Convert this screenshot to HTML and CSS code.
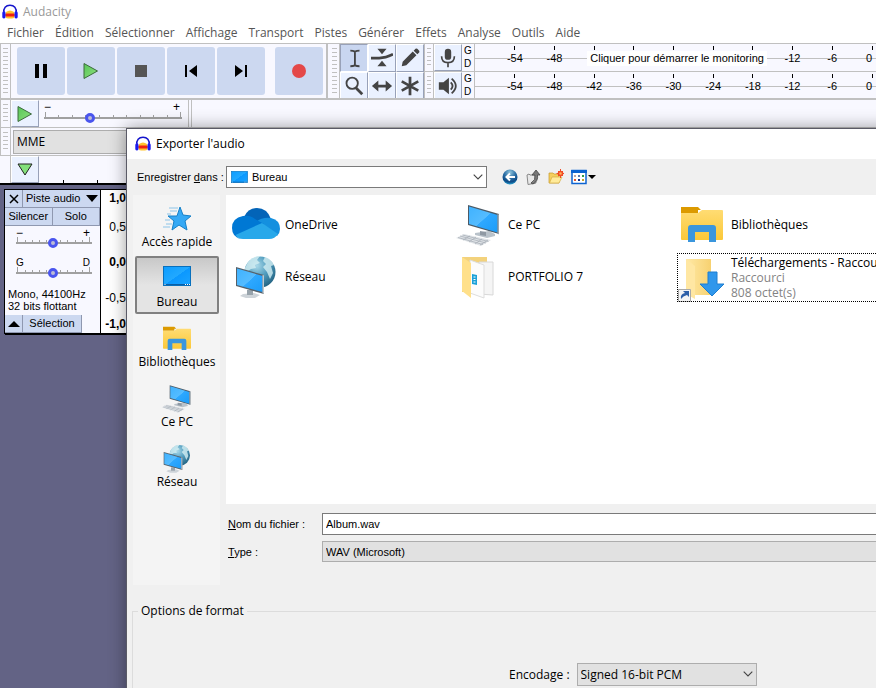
FILE: index.html
```html
<!DOCTYPE html>
<html lang="fr">
<head>
<meta charset="utf-8">
<title>Audacity</title>
<link rel="stylesheet" href="styles.css">
</head>
<body>
<svg class="defs" aria-hidden="true">
  <defs>
    <linearGradient id="gScreen" x1="0" y1="0" x2="1" y2="1"><stop offset="0" stop-color="#3fb2ff"/><stop offset=".5" stop-color="#55bcff"/><stop offset=".51" stop-color="#2ea8ff"/><stop offset="1" stop-color="#1b9cf8"/></linearGradient>
    <linearGradient id="gDesk" x1="0" y1="0" x2="1" y2="1"><stop offset="0" stop-color="#0c9cff"/><stop offset=".5" stop-color="#22a9ff"/><stop offset=".51" stop-color="#0b98ff"/><stop offset="1" stop-color="#1ba4ff"/></linearGradient>
    <linearGradient id="gFolder" x1="0" y1="0" x2="0" y2="1"><stop offset="0" stop-color="#ffdc73"/><stop offset="1" stop-color="#fbc838"/></linearGradient>
    <linearGradient id="gPale" x1="0" y1="0" x2="1" y2="0"><stop offset="0" stop-color="#ffe9a6"/><stop offset="1" stop-color="#f7d170"/></linearGradient>
    <radialGradient id="gGlobe" cx=".4" cy=".3" r=".75"><stop offset="0" stop-color="#a9d8e8"/><stop offset=".5" stop-color="#4f9bbd"/><stop offset="1" stop-color="#21607f"/></radialGradient>
    <linearGradient id="gPlay" x1="0" y1="0" x2="1" y2="1"><stop offset="0" stop-color="#58c658"/><stop offset="1" stop-color="#8ee07e"/></linearGradient>
    <radialGradient id="gBack" cx=".5" cy=".2" r=".85"><stop offset="0" stop-color="#8fc4dc"/><stop offset=".45" stop-color="#2b6ea5"/><stop offset=".75" stop-color="#0d4a86"/><stop offset="1" stop-color="#35c2ee"/></radialGradient>
    <symbol id="logo" viewBox="0 0 16 16"><path d="M4 8q4-3 8 0l1 3-1 3q-4 1-8 0l-1-3z" fill="#ffc42e"/><path d="M3 11l2-2 1 1 1-1 1 1 1-1 1 1 1-1 2 2-2 2-1-1-1 1-1-1-1 1-1-1-1 1z" fill="#f02010"/><path d="M2 9C1 4 4 1.200 8 1.200S15 4 14 9" fill="none" stroke="#1515cc" stroke-width="1.500"/><rect x=".3" y="7.500" width="3.200" height="7" rx="1.400" fill="#1a1af0"/><rect x="12.500" y="7.500" width="3.200" height="7" rx="1.400" fill="#1a1af0"/></symbol>
    <symbol id="deskicon" viewBox="0 0 28 20"><rect x=".5" y=".5" width="27" height="19" fill="url(#gDesk)" stroke="#0870bd"/><path d="M1 18.500h26" stroke="#0a5ea5"/><path d="M1.500 18.500h1M22 18.500h1M24 18.500h1M26 18.500h1" stroke="#fff"/></symbol>
    <symbol id="pc" viewBox="0 0 48 48"><path d="M20 33l14-2 6 3v2l-8 2-12-3z" fill="#b9c2ca"/><path d="M25 31l6 1v4l-6-1z" fill="#8f99a3"/><path d="M13 5l31 9v20L13 25z" fill="#4c5a66"/><path d="M14 6.500l28.500 8.500v17.500L14 24z" fill="url(#gScreen)"/><path d="M42.500 14l1.500.5v20l-1.500-1z" fill="#9aa5ae"/><path d="M1 38l8-4 27 6-10 6z" fill="#dfe3e7"/><path d="M5 36l26 7M3 37.500l25 7M7.500 35l26 6.500M8 40l7-4M14 42l7-5M20 44l7-5M25 45l8-5" stroke="#a3abb3" stroke-width=".7" fill="none"/></symbol>
    <symbol id="net" viewBox="0 0 48 48"><circle cx="28" cy="20" r="15.500" fill="url(#gGlobe)"/><path d="M16 10q5-6 12-6l-3 4 3 3-5 2 1 3-5 1-3 2-4-1zM33 5q6 2 9 8l-3 1 2 7-3 6-3-7-4-5 3-3-3-3z" fill="#d5eff3" opacity=".8"/><path d="M11 42l11-1 6 2-5 3h-9l-6-2z" fill="#cdd3d8"/><path d="M15 38h6v5h-6z" fill="#98a3ab"/><path d="M4 15l28 8v19L4 34z" fill="#56616a"/><path d="M5 16.500L30.500 24v16L5 33z" fill="url(#gScreen)"/><path d="M30.500 23l1.500.3V42l-1.500-1z" fill="#c1c9cf"/></symbol>
    <symbol id="lib" viewBox="0 0 48 48"><path d="M3 7h17l3 3h-3v3H3z" fill="#dc9a00"/><path d="M3 13h17l4-3h20q1 0 1 1v28q0 1-1 1H4q-1 0-1-1z" fill="url(#gFolder)"/><path d="M10 42V28q0-3 3-3h22q3 0 3 3v14h-7V32H17v10z" fill="#3a96dd"/></symbol>
    <symbol id="play" viewBox="0 0 16 18"><path d="M1 1.500L14.500 9 1 16.500z" fill="url(#gPlay)" stroke="#3c6b3c"/></symbol>
    <symbol id="chev" viewBox="0 0 10 6"><path d="M.7.7L5 5 9.300.7" fill="none" stroke="#444" stroke-width="1.100"/></symbol>
    <symbol id="ticks" viewBox="0 0 138 8"><path d="M0 6h138" stroke="#a0a0a0" stroke-width="2"/><path d="M1.500 0v6M14.500 3v3M28.500 3v3M41.500 3v3M55.500 3v3M69.500 3v3M82.500 3v3M96.500 3v3M109.500 3v3M123.500 3v3M136.500 0v6" stroke="#a0a0a0"/></symbol>
    <symbol id="ticksmall" viewBox="0 0 76 8"><path d="M0 6h76" stroke="#a0a0a0" stroke-width="2"/><path d="M1.500 0v6M9.500 3v3M16.500 3v3M23.500 3v3M30.500 3v3M44.500 3v3M51.500 3v3M59.500 3v3M66.500 3v3M73.500 0v6" stroke="#a0a0a0"/></symbol>
  </defs>
</svg>

<div class="app">
  <header class="titlebar"><svg class="logo"><use href="#logo"/></svg><span>Audacity</span></header>
  <nav class="menu">
    <a href="#">Fichier</a><a href="#">Édition</a><a href="#">Sélectionner</a><a href="#">Affichage</a><a href="#">Transport</a><a href="#">Pistes</a><a href="#">Générer</a><a href="#">Effets</a><a href="#">Analyse</a><a href="#">Outils</a><a href="#">Aide</a>
  </nav>

  <div class="dock dock-main">
    <div class="grip"></div>
    <div class="transport">
      <button aria-label="Pause"><svg width="16" height="16"><path d="M2 1h4v14H2zM10 1h4v14h-4z"/></svg></button>
      <button aria-label="Lecture"><svg width="16" height="18"><use href="#play"/></svg></button>
      <button aria-label="Arrêter"><svg width="12" height="12"><path d="M0 0h12v12H0z" fill="#555"/></svg></button>
      <button aria-label="Début"><svg width="14" height="14"><path d="M1 1h2v12H1zM13 1v12L5 7z"/></svg></button>
      <button aria-label="Fin"><svg width="14" height="14"><path d="M11 1h2v12h-2zM1 1v12l8-6z"/></svg></button>
      <button class="record" aria-label="Enregistrer"><svg width="14" height="14"><circle cx="7" cy="7" r="7" fill="#e44848"/></svg></button>
    </div>
    <div class="grip grip-tools"></div>
    <div class="tools">
      <button class="on" aria-label="Sélection"><svg viewBox="0 0 24 24"><path d="M8 4q3 0 5 1 2-1 5-1M13 5v15M8 21q3 0 5-1 2 1 5 1" fill="none" stroke="#444" stroke-width="2"/></svg></button>
      <button aria-label="Enveloppe"><svg viewBox="0 0 24 24"><path d="M7 2h10l-5 6zM7 21h10l-5-6z"/><path d="M0 12h9q7 0 15-4" fill="none" stroke="#444" stroke-width="3"/></svg></button>
      <button aria-label="Dessin"><svg viewBox="0 0 24 24"><path d="M3 21l1-5L15 5l4 4L8 20zM16 4l2-2q1-.5 2 0l2 2q.5 1 0 2l-2 2z"/></svg></button>
      <button aria-label="Zoom"><svg viewBox="0 0 24 24"><circle cx="10" cy="9" r="6.200" fill="none" stroke="#444" stroke-width="2"/><path d="M14 14l7 7" stroke="#444" stroke-width="3"/></svg></button>
      <button aria-label="Glissement"><svg viewBox="0 0 24 24"><path d="M1 12l7-6v4.500h8V6l7 6-7 6v-4.500H8V18z"/></svg></button>
      <button aria-label="Multi-outils"><svg viewBox="0 0 24 24"><path d="M12 2v20M3 7l18 10M21 7L3 17" stroke="#444" stroke-width="3"/></svg></button>
    </div>
    <div class="meters">
      <div class="meter">
        <div class="grip grip-meter"></div>
        <button class="tool" aria-label="Microphone"><svg viewBox="0 0 24 24"><rect x="8.500" y="2" width="7" height="12" rx="3.500"/><path d="M5 10q0 7 7 7t7-7M12 17v5" fill="none" stroke="#444" stroke-width="1.800"/></svg></button>
        <div class="chan"><span>G</span><span>D</span></div>
        <div class="scale"><span>-54</span><span>-48</span><span></span><span></span><span></span><span></span><span></span><span>-12</span><span>-6</span><span>0</span><p class="hint">Cliquer pour démarrer le monitoring</p></div>
      </div>
      <div class="meter">
        <div class="grip grip-meter"></div>
        <button class="tool" aria-label="Haut-parleur"><svg viewBox="0 0 24 24"><path d="M2 8h5l6-5v18l-6-5H2z"/><path d="M15 8q4 4 0 8M16 4q9 8 0 16" fill="none" stroke="#444" stroke-width="2"/></svg></button>
        <div class="chan"><span>G</span><span>D</span></div>
        <div class="scale"><span>-54</span><span>-48</span><span>-42</span><span>-36</span><span>-30</span><span>-24</span><span>-18</span><span>-12</span><span>-6</span><span>0</span></div>
      </div>
    </div>
  </div>

  <div class="dock dock-speed">
    <div class="grip"></div>
    <button class="tool" aria-label="Lire à vitesse"><svg class="playicon"><use href="#play"/></svg></button>
    <div class="slider slider-speed"><div class="ends"><span>−</span><span>+</span></div><svg><use href="#ticks"/></svg><input type="range" aria-label="Vitesse" value="32"></div>
    <div class="endbar"></div>
  </div>

  <div class="dock dock-device">
    <div class="grip"></div>
    <select aria-label="Hôte audio"><option>MME</option></select>
  </div>

  <div class="dock dock-ruler">
    <div class="rulerpad"></div>
    <button class="tool" aria-label="Options de règle"><svg width="16" height="14"><path d="M1 1h14L8 12z" fill="#83e07b" stroke="#222"/></svg></button>
    <div class="rulerticks"></div>
  </div>

  <main class="tracks">
    <section class="track">
      <div class="panel">
        <div class="prow prow-name"><button aria-label="Fermer"><svg width="10" height="10"><path d="M1 1l8 8M9 1L1 9" stroke="#000" stroke-width="1.500"/></svg></button><button class="name"><span>Piste audio</span><svg width="12" height="7"><path d="M0 0h12L6 7z"/></svg></button></div>
        <div class="prow prow-ms"><button>Silencer</button><button>Solo</button></div>
        <div class="slider slider-small"><div class="ends"><span>−</span><span>+</span></div><svg><use href="#ticksmall"/></svg><input type="range" aria-label="Gain" value="49"></div>
        <div class="slider slider-small slider-pan"><div class="ends"><span>G</span><span>D</span></div><svg><use href="#ticksmall"/></svg><input type="range" aria-label="Panoramique" value="49"></div>
        <p class="info">Mono, 44100Hz<br>32 bits flottant</p>
        <div class="prow prow-sel"><button aria-label="Replier"><svg width="12" height="6"><path d="M0 6h12L6 0z"/></svg></button><button>Sélection</button></div>
      </div>
      <div class="vruler"><b>1,0</b><span>0,5</span><b>0,0</b><span>-0,5</span><b>-1,0</b></div>
    </section>
  </main>

  <div class="dialog" role="dialog" aria-label="Exporter l'audio">
    <div class="dtitle"><svg class="logo"><use href="#logo"/></svg><span>Exporter l'audio</span></div>
    <div class="lookin">
      <label for="dir">Enregistrer <u>d</u>ans :</label>
      <div class="combo combo-dir"><svg class="mini"><use href="#deskicon"/></svg><select id="dir"><option>Bureau</option></select><svg class="chev"><use href="#chev"/></svg></div>
      <div class="navicons">
        <button aria-label="Précédent"><svg width="16" height="16"><circle cx="8" cy="8" r="7.500" fill="url(#gBack)"/><path d="M13 8H5M8 4.500L4.500 8 8 11.500" fill="none" stroke="#fff" stroke-width="2"/></svg></button>
        <button aria-label="Dossier parent"><svg width="16" height="16"><path d="M2 6l2-1 1 1h5l1 8-8 1.500z" fill="#e8e8e8" stroke="#888"/><path d="M6 14q5-3 4-8H7l4-5 4 5h-2.500q1 6-4.500 9z" fill="#777" stroke="#444" stroke-width=".8"/></svg></button>
        <button aria-label="Nouveau dossier"><svg width="16" height="16"><path d="M1 14V4h4l1 1h5v9z" fill="#f5cf5d" stroke="#c69a2c" stroke-width=".7"/><path d="M1.500 14L4 8h10l-3 6z" fill="#ffeb9a" stroke="#d6ae42" stroke-width=".7"/><circle cx="12.500" cy="4.500" r="2" fill="#ffb55c" stroke="#f04b24" stroke-width="1.500"/><path d="M12.500 0v2M12.500 7v2M8.500 4.500h2M14.500 4.500h1.500M10 2l1 1M15 2l-1 1M10 7l1-1M15 7l-1-1" stroke="#f04b24"/></svg></button>
        <button aria-label="Affichage"><svg width="25" height="16"><rect x="1" y="1.500" width="14" height="13" fill="#fff" stroke="#0c63d0" stroke-width="1.500"/><path d="M0 1h16v3H0z" fill="#0c63d0"/><path d="M3 6h2v2H3z" fill="#b9a5a5"/><path d="M7 6h2v2H7z" fill="#5b7bb0"/><path d="M11 6h2v2h-2z" fill="#2e9a46"/><path d="M3 10h2v2H3z" fill="#e8582d"/><path d="M7 10h2v2H7z" fill="#12358c"/><path d="M11 10h2v2h-2z" fill="#c9a227"/><path d="M17 6h8l-4 4z"/></svg></button>
      </div>
    </div>

    <div class="browse">
      <div class="places">
        <button><svg viewBox="0 0 32 32"><path d="M19 5l3 8 8 1-6 5 2 9-8-5-7 5 2-9-6-5h9z" fill="#35a9f5" stroke="#1580c8"/><path d="M8 6h9M9 9h7M6 12h4M4 18h5M5 22h6M2 25h7" stroke="#8cc4e8"/></svg><span>Accès rapide</span></button>
        <button class="current"><svg class="desk"><use href="#deskicon"/></svg><span>Bureau</span></button>
        <button><svg><use href="#lib"/></svg><span>Bibliothèques</span></button>
        <button><svg><use href="#pc"/></svg><span>Ce PC</span></button>
        <button><svg><use href="#net"/></svg><span>Réseau</span></button>
      </div>
      <div class="files">
        <div class="file"><svg viewBox="0 0 48 48"><path d="M12 17Q16 8 25 8q10 0 14 11l-9 8z" fill="#0364b8"/><path d="M39 18q9 2 9 11 0 4-3 7L24 22q6-5 15-4z" fill="#1490df"/><path d="M9 39q-9-2-9-11 0-10 11-12 7-1 12 3l9 5L5 37z" fill="#0078d4"/><path d="M3.500 35L30 23l16 11q-3 5-9 5H11q-5 0-7.500-4z" fill="#28a8ea"/></svg><span>OneDrive</span></div>
        <div class="file"><svg><use href="#pc"/></svg><span>Ce PC</span></div>
        <div class="file"><svg><use href="#lib"/></svg><span>Bibliothèques</span></div>
        <div class="file"><svg><use href="#net"/></svg><span>Réseau</span></div>
        <div class="file"><svg viewBox="0 0 48 48"><path d="M7 5h25v35H7z" fill="#f3d27c"/><path d="M24 10h14v33l-14-1z" fill="#f5f5f5" stroke="#d8d8d8"/><path d="M15 8l14 5v33l-14-5z" fill="#fcfcfc" stroke="#ddd"/><path d="M17 22l5 1v10l-5-1z" fill="#1ba1d8"/><path d="M18.500 25h2M18.500 27.500h2M18.500 30h2" stroke="#fff"/><path d="M7 5l9 6v35l-9-7z" fill="#ffe08a"/></svg><span>PORTFOLIO 7</span></div>
        <div class="file focus"><svg viewBox="0 0 48 48"><path d="M8 5h25v36H8z" fill="url(#gPale)"/><path d="M8 5l9 7v33l-9-5z" fill="#ffe7a3"/><path d="M30 18h9v12h7L34 42 22 30h8z" fill="#2f97ec" stroke="#1f7fd0"/><path d="M.5 35.500h12v12H.5z" fill="#f4f4f4" stroke="#aaa"/><path d="M3 45q-1-5 4-6l-2-2h6v6l-2-2q-4 1-6 4z" fill="#2d5fa8"/></svg><span>Téléchargements - Raccourci<small>Raccourci</small><small>808 octet(s)</small></span></div>
      </div>
    </div>

    <div class="fields">
      <label for="fname"><u>N</u>om du fichier :</label><input id="fname" type="text" value="Album.wav">
      <label for="ftype"><u>T</u>ype :</label><select id="ftype"><option>WAV (Microsoft)</option></select>
    </div>

    <fieldset class="options">
      <legend>Options de format</legend>
      <div class="encoding"><label for="enc">Encodage :</label><div class="combo"><select id="enc"><option>Signed 16-bit PCM</option></select><svg class="chev"><use href="#chev"/></svg></div></div>
    </fieldset>
  </div>
</div>
</body>
</html>
```
FILE: styles.css
```css
* { box-sizing: border-box; }
body { margin: 0; font: 12px/16px "Open Sans", "Noto Sans", sans-serif; color: #000; }
button, select, input { font: inherit; color: inherit; margin: 0; padding: 0; border: 0; border-radius: 0; background: none; }
select { appearance: none; }
p { margin: 0; }
svg { display: block; flex: none; }
.defs { position: absolute; width: 0; height: 0; }

.app { position: relative; display: flex; flex-direction: column; min-height: 100vh; overflow: hidden; background: #fff; }
.titlebar { display: flex; align-items: center; gap: 5px; height: 23px; padding-left: 2px; color: #999; }
.logo { width: 16px; height: 16px; }
.menu { display: flex; gap: 11px; height: 20px; padding-left: 7px; font-size: 12px; line-height: 20px; }
.menu a { color: #555; text-decoration: none; }

.dock { display: flex; background: #f8f8ff; border-top: 1px solid #c0c0c0; }
.dock-main { height: 55px; }
.grip { flex: none; width: 11px; border: solid #c0c0c0; border-width: 0 1px; padding: 4px 2px; }
.grip::before { content: ""; display: block; height: 100%; background: repeating-linear-gradient(#c0c0c0 0 1px, transparent 1px 4px); }

.transport { display: flex; gap: 2px; padding: 3px 3px 3px 6px; border-right: 2px solid #c0c0c0; }
.transport button { display: grid; place-items: center; width: 48px; height: 48px; border-radius: 3px; background: #ccd8f0; }
.transport .record { margin-left: 8px; }
.grip-tools { border-left-width: 0; margin-left: 1px; padding-left: 3px; }

.tools { display: grid; grid-template-columns: repeat(3, 28px); grid-template-rows: repeat(2, 28px); }
.tools button, .tool { display: grid; place-items: center; flex: none; width: 28px; border: 1px solid #fff; border-right-color: #98a1b8; border-bottom-color: #98a1b8; background: #eaf1ff; fill: #444; }
.tools .on { background: #c9d6f0; border-color: #98a1b8 #fff #fff #98a1b8; }
.tools svg, .meter .tool svg { width: 22px; height: 22px; }

.meters { flex: 1; display: grid; grid-template-rows: 28px 28px; font: 11px/13px "Liberation Sans", Arial, sans-serif; }
.meter { display: flex; border-bottom: 1px solid #c0c0c0; }
.grip-meter { width: 10px; border-width: 0 1px; padding: 4px 2px; }
.chan { display: flex; flex-direction: column; width: 12px; padding-left: 2px; font-size: 10px; }
.scale { position: relative; flex: 1; display: grid; grid-template-columns: repeat(9, 1fr) 24px; padding-left: 20px; border-left: 1px solid #c0c0c0; background: linear-gradient(#c0c0c0, #c0c0c0) 0 14px / 100% 1px no-repeat; }
.scale > span { padding-top: 8px; text-align: center; background: linear-gradient(#000, #000) 50% 2px / 1px 4px no-repeat; }
.scale > span:nth-child(10) { padding-right: 4px; text-align: right; background-position: 20px 2px; }
.hint { position: absolute; left: 28%; top: 7px; padding: 1px 3px; background: #fff; white-space: nowrap; }

.dock-speed { height: 29px; border-top-width: 2px; }
.playicon { width: 16px; height: 18px; }
.slider { display: grid; }
.slider > svg, .slider > input { grid-area: 2 / 1; width: 100%; }
.ends { display: flex; justify-content: space-between; padding-right: 2px; font: 12px/10px "Liberation Sans", Arial, sans-serif; }
.slider > svg { height: 8px; align-self: start; }
.slider input { appearance: none; height: 12px; }
.slider input::-webkit-slider-thumb { appearance: none; width: 10px; height: 10px; border: 3px solid #4a55ee; border-radius: 50%; background: #bcbcd4; }
.slider-speed { width: 138px; margin: 2px 6px 0 5px; grid-template-rows: 10px 12px; align-content: start; }
.endbar { width: 4px; border: solid #c0c0c0; border-width: 0 1px; }

.dock-device { height: 28px; }
.dock-device select { width: 180px; height: 24px; margin: 2px 0 0 2px; padding-left: 3px; border: 1px solid #adadad; background: #e1e1e1; }

.dock-ruler { height: 30px; border-bottom: 2px solid #000; }
.rulerpad { width: 11px; border-right: 1px solid #c0c0c0; }
.rulerticks { flex: 1; background: repeating-linear-gradient(90deg, transparent 0 24px, #000 24px 25px, transparent 25px 34px) 0 100% / 100% 3px no-repeat; }

.tracks { flex: 1; padding: 4px; background: #636385; font: 11px/13px "Liberation Sans", Arial, sans-serif; }
.track { display: flex; height: 145px; border: 1px solid #000; background: #fff; box-shadow: 1px 1px #000; }
.panel { width: 96px; border-right: 1px solid #000; background: #f8f8ff; }
.prow { display: flex; }
.prow button { display: flex; align-items: center; justify-content: center; background: #ccd8f0; border: solid #8f98b0; border-width: 0 1px 1px 0; }
.prow-name button { width: 18px; height: 18px; }
.prow-name .name { flex: 1; justify-content: space-between; padding: 0 2px 0 3px; border-right: 0; }
.prow-ms button { flex: 1; height: 18px; }
.slider-small { width: 76px; margin: 2px 0 0 11px; grid-template-rows: 9px 12px; }
.slider-pan { margin-top: 9px; }
.slider-pan .ends { font-size: 10px; }
.info { padding: 9px 0 3px 3px; line-height: 12px; }
.prow-sel button { height: 18px; width: 18px; }
.prow-sel button + button { width: 59px; }
.vruler { display: grid; grid-template-rows: 29px 35px 36px 26px 13px; width: 26px; padding: 2px 1px 0 0; text-align: right; font-size: 12px; }

.dialog { position: absolute; left: 126px; top: 128px; right: -20px; min-height: 580px; display: flex; flex-direction: column; border: 1px solid #5a5a66; background: #f0f0f0; box-shadow: 0 0 16px rgba(0, 0, 0, .4); }
.dtitle { display: flex; align-items: center; gap: 5px; height: 30px; padding-left: 8px; background: #fff; }
.lookin { display: flex; align-items: center; height: 36px; padding-left: 10px; font-family: "Liberation Sans", Arial, sans-serif; font-size: 11px; }
.lookin label { width: 89px; }
.combo { position: relative; }
.combo select { width: 100%; }
.chev { position: absolute; right: 4px; top: 8px; width: 10px; height: 6px; pointer-events: none; }
.combo-dir { width: 261px; }
.combo-dir select { height: 22px; padding-left: 25px; border: 1px solid #7a7a7a; background: #fff; }
.mini { position: absolute; left: 5px; top: 5px; width: 17px; height: 12px; pointer-events: none; }
.navicons { display: flex; gap: 7px; padding-left: 15px; }

.browse { display: flex; gap: 6px; padding: 0 0 0 6px; margin-bottom: -81px; align-items: flex-start; }
.places { flex: none; width: 87px; height: 390px; padding: 1px; background: #f4f4f4; }
.places button { display: flex; flex-direction: column; align-items: center; width: 84px; height: 58px; margin: 0 0 2px 1px; padding-top: 5px; border: 1px solid transparent; }
.places svg { width: 32px; height: 32px; }
.places .desk { width: 28px; height: 20px; margin: 4px 0 8px; }
.places .current { padding-top: 4px; border: 2px solid #808080; border-radius: 2px; background: linear-gradient(#c8c8c8, #e4e4e4 50%); }
.files { flex: 1; display: grid; grid-template-columns: repeat(3, 223px); grid-auto-rows: 52px; align-content: start; height: 309px; padding: 3px 0 0 4px; overflow: hidden; background: #fff; }
.file { display: flex; align-items: center; gap: 5px; padding-left: 2px; white-space: nowrap; line-height: 15px; }
.file svg { width: 48px; height: 48px; }
.file small { display: block; font-size: 12px; color: #838383; }
.focus { height: 47px; margin: 4px 0 0 2px; padding-left: 0; outline: 1px dotted #000; }

.fields { display: grid; grid-template-columns: 94px 1fr; row-gap: 6px; align-items: center; margin: 9px 0 0 101px; font: 11px/16px "Liberation Sans", Arial, sans-serif; }
.fields input, .fields select { height: 22px; padding: 0 3px; border: 1px solid #7a7a7a; background: #fff; }
.fields select { height: 21px; border-color: #adadad; background: #e1e1e1; }

.options { margin: 41px 10px 0 5px; padding: 0; border: 1px solid #dcdcdc; border-bottom: 0; flex: 1; }
.options legend { margin-left: 5px; padding: 0 3px; }
.encoding { display: flex; align-items: center; gap: 7px; margin: 44px 0 0 376px; }
.encoding .combo { width: 180px; }
.encoding select { height: 23px; padding-left: 3px; border: 1px solid #adadad; background: #e1e1e1; }
```
